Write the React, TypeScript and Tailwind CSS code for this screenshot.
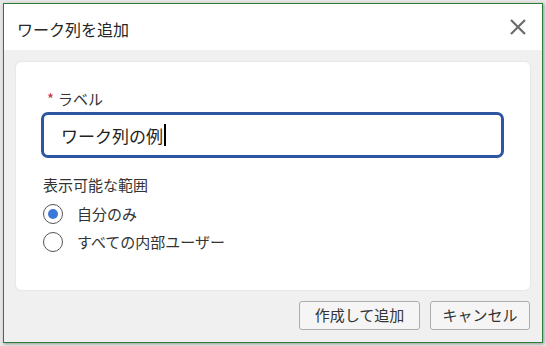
import React from "react";

const App = () => {
  return (
    <div
      className="w-[546px] h-[346px] bg-[#e6e6e6] p-[3px]"
      style={{ fontFamily: '"Noto Sans CJK JP", "Noto Sans", sans-serif' }}
    >
      <div className="w-[540px] h-[340px] border border-[#2f7d3a] bg-[#f0f0f0] flex flex-col shadow-[1px_1px_3px_rgba(0,0,0,0.35)]">
        {/* Header */}
        <div className="h-[46px] bg-white flex items-center justify-between pl-[13px] pr-[13px] pt-[3px] shrink-0">
          <span className="text-[16px] text-[#262626] leading-none">ワーク列を追加</span>
          <svg width="20" height="20" viewBox="0 0 20 20" className="mr-[1px] -mt-[3px]">
            <path d="M3 3 L17 17 M17 3 L3 17" stroke="#6b6b6b" strokeWidth="2.2" />
          </svg>
        </div>

        {/* Body */}
        <div className="flex-1 flex flex-col px-[12px] pt-[12px] pb-[12px]">
          <div className="h-[228px] bg-white rounded-[5px] shadow-[0_0_2px_rgba(0,0,0,0.12)] pl-[25px] pr-[26px] pt-[27px]">
            <div className="text-[15px] text-[#333] leading-[20px] pl-[6px]">
              <span className="text-[#c4314b] mr-[4px]">*</span>ラベル
            </div>
            <div className="mt-[3px] h-[46px] border-[3px] border-[#2e55a0] rounded-[7px] flex items-center pl-[17px]">
              <span className="text-[17px] text-[#222] leading-none">ワーク列の例</span>
              <span className="w-[2px] h-[22px] bg-black ml-[1px]" />
            </div>
            <div className="mt-[17px] text-[15px] text-[#333] leading-[20px] pl-[2px]">表示可能な範囲</div>
            <div className="mt-[9px] flex flex-col gap-[8px] pl-[2px]">
              <div className="flex items-center h-[20px] leading-[20px]">
                <span className="w-[20px] h-[20px] rounded-full border-[1.5px] border-[#555] flex items-center justify-center">
                  <span className="w-[10px] h-[10px] rounded-full bg-[#3b78d8]" />
                </span>
                <span className="ml-[14px] text-[15px] text-[#333]">自分のみ</span>
              </div>
              <div className="flex items-center h-[20px] leading-[20px]">
                <span className="w-[20px] h-[20px] rounded-full border-[1.5px] border-[#555]" />
                <span className="ml-[14px] text-[15px] text-[#333]">すべての内部ユーザー</span>
              </div>
            </div>
          </div>

          <div className="mt-[11px] flex justify-end gap-[10px]">
            <button className="h-[29px] w-[121px] border border-[#adadad] rounded-[3px] bg-[#f5f5f5] text-[15px] text-[#333] flex items-center justify-center">
              作成して追加
            </button>
            <button className="h-[29px] w-[100px] border border-[#adadad] rounded-[3px] bg-[#f5f5f5] text-[15px] text-[#333] flex items-center justify-center">
              キャンセル
            </button>
          </div>
        </div>
      </div>
    </div>
  );
};

export default App;
